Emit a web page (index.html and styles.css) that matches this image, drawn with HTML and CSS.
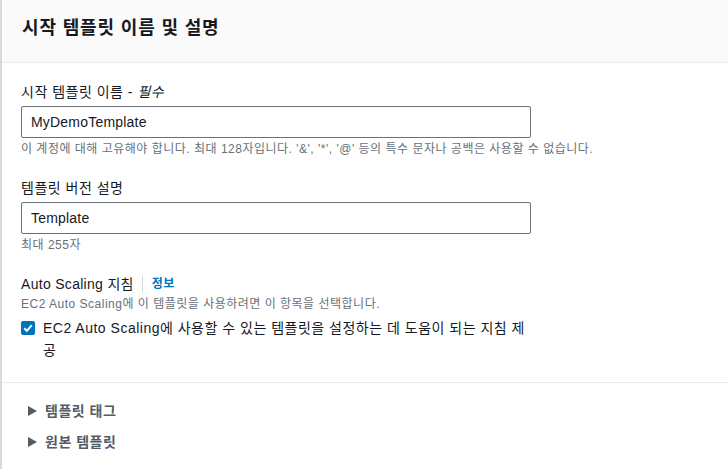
FILE: index.html
```html
<!DOCTYPE html>
<html lang="ko">
<head>
<meta charset="utf-8">
<link rel="stylesheet" href="styles.css">
</head>
<body>
<div class="panel">
  <div class="header"><h2 class="title">시작 템플릿 이름 및 설명</h2></div>
  <div class="content">
    <div class="field">
      <label class="label">시작 템플릿 이름 - <i>필수</i></label>
      <div class="input">MyDemoTemplate</div>
      <div class="hint">이 계정에 대해 고유해야 합니다. 최대 128자입니다. '&amp;', '*', '@' 등의 특수 문자나 공백은 사용할 수 없습니다.</div>
    </div>
    <div class="field">
      <label class="label">템플릿 버전 설명</label>
      <div class="input">Template</div>
      <div class="hint">최대 255자</div>
    </div>
    <div class="field">
      <div class="label-row"><span class="label">Auto Scaling 지침</span><span class="sep"></span><a class="info">정보</a></div>
      <div class="hint desc">EC2 Auto Scaling에 이 템플릿을 사용하려면 이 항목을 선택합니다.</div>
      <div class="check-row">
        <span class="checkbox"><svg width="14" height="14" viewBox="0 0 14 14"><rect width="14" height="14" rx="2" fill="#0073bb"/><path d="M3.2 7.2 L5.9 9.8 L10.8 4.2" fill="none" stroke="#fff" stroke-width="2"/></svg></span>
        <span class="check-label">EC2 Auto Scaling에 사용할 수 있는 템플릿을 설정하는 데 도움이 되는 지침 제공</span>
      </div>
    </div>
  </div>
  <div class="expanders">
    <div class="exp"><span class="tri"></span>템플릿 태그</div>
    <div class="exp"><span class="tri"></span>원본 템플릿</div>
  </div>
</div>
</body>
</html>
```
FILE: styles.css
```css
* { box-sizing: border-box; }
html, body { margin: 0; padding: 0; background: #fff; }
body {
  font-family: "Liberation Sans", "Noto Sans CJK KR", sans-serif;
  color: #16191f;
  font-size: 14px;
  letter-spacing: 0.5px;
}
.panel {
  border-left: 2px solid #d5dbdb;
  min-height: 469px;
}
.header {
  background: #fafafa;
  border-bottom: 1px solid #eaeded;
  height: 63px;
  padding: 14px 20px 0;
}
.title {
  margin: 0;
  font-size: 18px;
  font-weight: 700;
  line-height: 28px;
  letter-spacing: 0.85px;
}
.content {
  padding: 18px 19px 21px;
  border-bottom: 1px solid #eaeded;
}
.field { margin-bottom: 19px; width: 510px; }
.field:last-child { margin-bottom: 0; }
.label { display: block; line-height: 22px; font-size: 14px; }
.label i { font-style: italic; }
.input {
  margin-top: 3px;
  height: 32px;
  border: 1px solid #687078;
  border-radius: 2px;
  padding: 0 9px;
  line-height: 30px;
  font-size: 14px;
  letter-spacing: 0.2px;
}
.hint {
  font-size: 12px;
  color: #687078;
  line-height: 18px;
  margin-top: 2px;
  white-space: nowrap;
}
.label-row { display: flex; align-items: center; line-height: 22px; }
.label-row .label { letter-spacing: 0.3px; }
.sep { width: 1px; height: 16px; background: #d5dbdb; margin: 0 9px 0 8px; }
.info { color: #0073bb; font-weight: 700; font-size: 12px; }
.desc { margin-top: 0; }
.check-row { display: flex; align-items: flex-start; margin-top: 4px; }
.checkbox { flex: none; width: 14px; height: 14px; margin-top: 4px; margin-right: 8px; display: flex; }
.check-label { line-height: 22px; }
.expanders { padding: 12px 25px; }
.exp {
  display: flex;
  align-items: center;
  font-weight: 700;
  color: #545b64;
  line-height: 22px;
  height: 31px;
}
.tri {
  width: 0; height: 0;
  border-left: 9px solid #545b64;
  border-top: 5.5px solid transparent;
  border-bottom: 5.5px solid transparent;
  margin-left: 1px;
  margin-right: 8px;
}
```
